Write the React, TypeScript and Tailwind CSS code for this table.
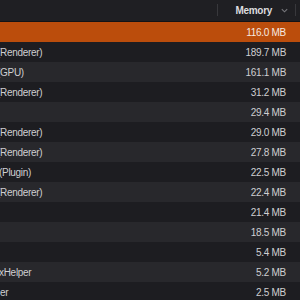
import React from 'react';

type Row = { name: string; shift: number; memory: string };

// only the tail of each process name is visible; shift pulls it left under the edge
const rows: Row[] = [
  { name: '', shift: 0, memory: '116.0 MB' },
  { name: '(Renderer)', shift: -3, memory: '189.7 MB' },
  { name: '(GPU)', shift: -3, memory: '161.1 MB' },
  { name: '(Renderer)', shift: -3, memory: '31.2 MB' },
  { name: '', shift: 0, memory: '29.4 MB' },
  { name: '(Renderer)', shift: -3, memory: '29.0 MB' },
  { name: '(Renderer)', shift: -3, memory: '27.8 MB' },
  { name: '(Plugin)', shift: -1, memory: '22.5 MB' },
  { name: '(Renderer)', shift: -3, memory: '22.4 MB' },
  { name: '', shift: 0, memory: '21.4 MB' },
  { name: '', shift: 0, memory: '18.5 MB' },
  { name: '', shift: 0, memory: '5.4 MB' },
  { name: 'xHelper', shift: -1, memory: '5.2 MB' },
  { name: 'er', shift: 0, memory: '2.5 MB' },
];

const App: React.FC = () => {
  return (
    <div
      className="w-[300px] h-[300px] overflow-hidden bg-[#1d1d21] text-[10px] tracking-[-0.3px]"
      style={{ fontFamily: '"Liberation Sans", Arial, sans-serif' }}
    >
      <div className="flex h-[22px] border-b border-[#131316] bg-[#1f1f23] pb-[1px]">
        <div className="flex-1 flex items-center justify-end">
          <div className="w-px h-[12px] bg-[#38383c]" />
        </div>
        <div className="w-[77px] flex items-center justify-end gap-[9px] pr-[7px] text-[#dcdcdf] font-bold">
          <span>Memory</span>
          <svg width="7" height="5" viewBox="0 0 7 5" fill="none">
            <path d="M0.8 1.2 L3.5 3.8 L6.2 1.2" stroke="#77777c" strokeWidth="1.1" />
          </svg>
        </div>
        <div className="w-[5px] flex items-center">
          <div className="w-px h-[12px] bg-[#38383c]" />
        </div>
      </div>
      {rows.map((r, i) => {
        const selected = i === 0;
        const stripe = i % 2 === 0 ? 'bg-[#28282c]' : 'bg-[#1d1d21]';
        return (
          <div
            key={i}
            className={`flex items-center h-[20px] ${selected ? 'bg-[#bb4d0c] text-[#f6e9e0]' : `${stripe} text-[#cfcfd2]`}`}
          >
            <div className="flex-1 overflow-hidden whitespace-nowrap">
              <span className="inline-block" style={{ marginLeft: r.shift }}>
                {r.name}
              </span>
            </div>
            <div className="pr-[14px] text-right whitespace-nowrap">{r.memory}</div>
          </div>
        );
      })}
    </div>
  );
};

export default App;
